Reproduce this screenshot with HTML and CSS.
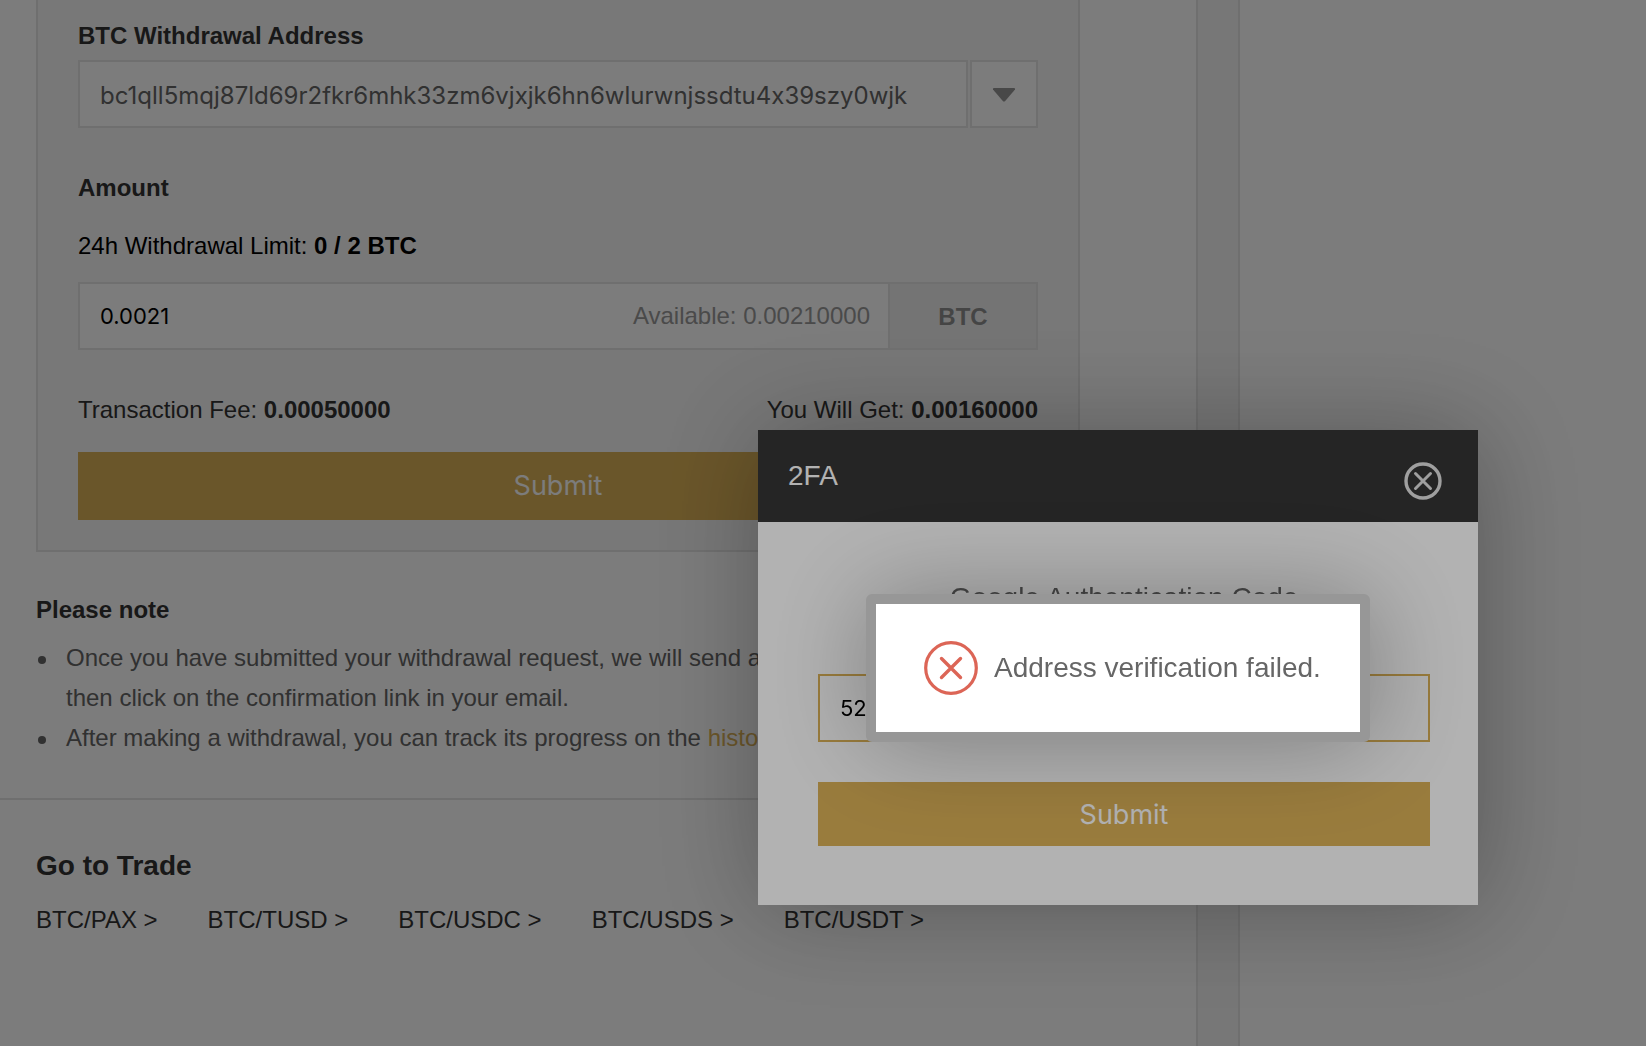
FILE: index.html
```html
<!DOCTYPE html>
<html lang="en">
<head>
  <meta charset="utf-8">
  <meta name="viewport" content="width=device-width, initial-scale=1">
  <title>Withdrawal</title>
  <link rel="stylesheet" href="styles.css">
</head>
<body>
  <div class="page">
    <main class="content">
      <form class="panel">
        <label class="label" for="address">BTC Withdrawal Address</label>
        <div class="address-row">
          <input class="field address-field" id="address" type="text" value="bc1qll5mqj87ld69r2fkr6mhk33zm6vjxjk6hn6wlurwnjssdtu4x39szy0wjk">
          <button class="dropdown" type="button" aria-label="Choose a saved address">
            <svg width="24" height="14" viewBox="0 0 24 14" aria-hidden="true"><path d="M1 1.6Q.4 0 2 0H22Q23.600 0 23 1.600L13.200 13Q12 14 10.800 13Z" fill="#959595"/></svg>
          </button>
        </div>

        <label class="label label-amount" for="amount">Amount</label>
        <p class="limit">24h Withdrawal Limit: <strong>0 / 2 BTC</strong></p>
        <div class="amount-row">
          <input class="amount-field" id="amount" type="text" value="0.0021">
          <span class="available">Available: 0.00210000</span>
          <span class="unit">BTC</span>
        </div>

        <div class="summary">
          <span>Transaction Fee: <strong>0.00050000</strong></span>
          <span>You Will Get: <strong>0.00160000</strong></span>
        </div>
        <button class="submit" type="button">Submit</button>
      </form>

      <section class="notes">
        <h2 class="notes-title">Please note</h2>
        <ul class="notes-list">
          <li>Once you have submitted your withdrawal request, we will send a confirmation email,<br>then click on the confirmation link in your email.</li>
          <li>After making a withdrawal, you can track its progress on the <a class="history-link" href="#">history</a> page.</li>
        </ul>
      </section>

      <section class="trade">
        <h2 class="trade-title">Go to Trade</h2>
        <nav class="trade-links">
          <a href="#">BTC/PAX &gt;</a>
          <a href="#">BTC/TUSD &gt;</a>
          <a href="#">BTC/USDC &gt;</a>
          <a href="#">BTC/USDS &gt;</a>
          <a href="#">BTC/USDT &gt;</a>
        </nav>
      </section>
    </main>
    <div class="gutter"></div>
    <aside class="side"></aside>
  </div>

  <div class="overlay overlay-dialog">
    <div class="dialog" role="dialog" aria-labelledby="dialog-title">
      <header class="dialog-header">
        <h2 class="dialog-title" id="dialog-title">2FA</h2>
        <button class="dialog-close" type="button" aria-label="Close">
          <svg width="38" height="38" viewBox="0 0 38 38" fill="none" stroke="#e4e4e4" aria-hidden="true"><circle cx="19" cy="19" r="17" stroke-width="3.400"/><path d="M11.500 11.500l15 15M26.500 11.500l-15 15" stroke-width="3" stroke-linecap="round"/></svg>
        </button>
      </header>
      <div class="dialog-body">
        <label class="code-label" for="code">Google Authentication Code</label>
        <input class="field code-field" id="code" type="text" value="52">
        <button class="submit submit-dialog" type="button">Submit</button>
      </div>
    </div>
  </div>

  <div class="overlay overlay-toast">
    <div class="toast" role="alert">
      <svg class="toast-icon" width="54" height="54" viewBox="0 0 54 54" fill="none" stroke="#dc6556" aria-hidden="true"><circle cx="27" cy="27" r="25.300" stroke-width="3.200"/><path d="M17.500 17.500l19 19M36.500 17.500l-19 19" stroke-width="3.400" stroke-linecap="round"/></svg>
      <span>Address verification failed.</span>
    </div>
  </div>
</body>
</html>
```
FILE: styles.css
```css
* {
  box-sizing: border-box;
}

body {
  margin: 0;
  background: #fff;
  color: #333;
  font: 24px/32px "Liberation Sans", Arial, sans-serif;
}

h2,
p,
ul {
  margin: 0;
  padding: 0;
}

input,
button {
  margin: 0;
  padding: 0;
  border: 0;
  border-radius: 0;
  outline: 0;
  font: inherit;
}

a {
  color: inherit;
  text-decoration: none;
}

.page {
  display: grid;
  grid-template-columns: minmax(0, 1fr) 40px 408px;
  min-height: 100vh;
}

.content {
  border-right: 2px solid #e6e6e6;
}

.gutter {
  background: #f5f5f5;
}

.side {
  border-left: 2px solid #e6e6e6;
}

.panel {
  margin: 0 116px 0 36px;
  padding: 20px 40px 30px;
  border: 2px solid #e6e6e6;
  border-top: 0;
  background: #f7f7f7;
}

.label {
  display: block;
  margin-bottom: 8px;
  font-weight: bold;
}

.field {
  height: 68px;
  padding: 0 20px;
  border: 2px solid #e6e6e6;
  background: #fff;
  font-family: Inter, "Liberation Sans", sans-serif;
  font-feature-settings: "calt" 0;
}

.address-row {
  display: flex;
  gap: 2px;
}

.address-field {
  flex: 1;
  min-width: 0;
  padding-top: 2px;
  color: #666;
}

.dropdown {
  display: flex;
  align-items: center;
  justify-content: center;
  width: 68px;
  padding-top: 2px;
  border: 2px solid #e6e6e6;
  background: #fff;
}

.label-amount {
  margin: 44px 0 26px;
}

.limit {
  margin-bottom: 20px;
  color: #000;
}

.amount-row {
  display: flex;
  align-items: center;
  height: 68px;
  border: 2px solid #e6e6e6;
  background: #fff;
}

.amount-field {
  flex: 1;
  min-width: 0;
  padding-left: 20px;
  background: transparent;
  color: #000;
  font-family: Inter, "Liberation Sans", sans-serif;
  font-size: 22px;
}

.available {
  margin-right: 18px;
  color: #999;
}

.unit {
  width: 148px;
  height: 64px;
  border-left: 2px solid #e6e6e6;
  background: #f0f0f0;
  color: #8f8f8f;
  font-weight: bold;
  line-height: 66px;
  text-align: center;
}

.summary {
  display: flex;
  justify-content: space-between;
  margin: 44px 0 26px;
}

.submit {
  display: block;
  width: 100%;
  height: 68px;
  background: #dcb258;
  color: #fff;
  font-family: Inter, "Liberation Sans", sans-serif;
  font-size: 27px;
}

.notes {
  padding: 42px 0 40px 36px;
  border-bottom: 2px solid #e6e6e6;
}

.notes-title {
  margin-bottom: 12px;
  font-size: 24px;
}

.notes-list {
  color: #666;
  line-height: 40px;
  list-style: none;
}

.notes-list li {
  position: relative;
  padding-left: 30px;
}

.notes-list li::before {
  content: "";
  position: absolute;
  top: 18px;
  left: 2px;
  width: 8px;
  height: 8px;
  border-radius: 50%;
  background: #666;
}

.history-link {
  color: #dcb258;
}

.trade {
  padding: 50px 36px 0;
}

.trade-title {
  margin-bottom: 22px;
  font-size: 28px;
}

.trade-links {
  display: flex;
  gap: 50px;
}

.overlay {
  position: fixed;
  inset: 0;
  display: flex;
  align-items: flex-start;
  justify-content: flex-end;
  background: rgba(0, 0, 0, 0.3);
}

.overlay-dialog {
  padding: 430px 168px 0 0;
}

.overlay-toast {
  padding: 594px 276px 0 0;
}

.dialog {
  width: 720px;
  background: #fff;
  box-shadow: 2px 2px 100px rgba(0, 0, 0, 0.3);
}

.dialog-header {
  display: flex;
  align-items: center;
  justify-content: space-between;
  height: 92px;
  padding: 0 36px 0 30px;
  background: #353535;
  color: #fff;
}

.dialog-title {
  font-size: 28px;
  font-weight: normal;
}

.dialog-close {
  display: flex;
  margin-top: 10px;
  background: transparent;
}

.dialog-body {
  display: flex;
  flex-direction: column;
  padding: 60px 48px 59px 60px;
  font-size: 28px;
}

.code-label {
  margin-bottom: 60px;
  color: #666;
  text-align: center;
}

.code-field {
  margin-bottom: 40px;
  border-color: #dcb258;
  color: #000;
  font-size: 22px;
}

.submit-dialog {
  height: 64px;
  padding-top: 2px;
}

.toast {
  display: flex;
  align-items: center;
  gap: 16px;
  width: 504px;
  height: 148px;
  padding: 0 48px;
  border: 10px solid #979797;
  border-radius: 6px;
  background: #fff;
  box-shadow: 2px 2px 100px rgba(0, 0, 0, 0.3);
  color: #666;
  font-size: 28px;
  white-space: nowrap;
}

.toast-icon {
  flex-shrink: 0;
}
```
